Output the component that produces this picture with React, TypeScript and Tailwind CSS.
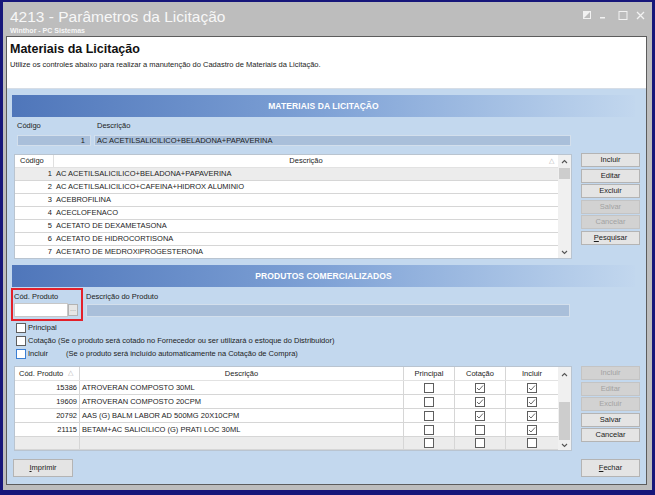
import React from "react";

const materiais = [
  "AC ACETILSALICILICO+BELADONA+PAPAVERINA",
  "AC ACETILSALICILICO+CAFEINA+HIDROX ALUMINIO",
  "ACEBROFILINA",
  "ACECLOFENACO",
  "ACETATO DE DEXAMETASONA",
  "ACETATO DE HIDROCORTISONA",
  "ACETATO DE MEDROXIPROGESTERONA",
];

const produtos = [
  { cod: "15386", desc: "ATROVERAN COMPOSTO 30ML", principal: false, cotacao: true, incluir: true },
  { cod: "19609", desc: "ATROVERAN COMPOSTO 20CPM", principal: false, cotacao: true, incluir: true },
  { cod: "20792", desc: "AAS (G) BALM LABOR AD 500MG 20X10CPM", principal: false, cotacao: true, incluir: true },
  { cod: "21115", desc: "BETAM+AC SALICILICO (G) PRATI LOC 30ML", principal: false, cotacao: false, incluir: true },
];

const SideButton: React.FC<{ label: string; disabled?: boolean; underline?: boolean; tall?: boolean }> = ({
  label,
  disabled,
  underline,
  tall,
}) => (
  <div
    className={`${tall ? "h-[18px]" : "h-[14px]"} flex items-center justify-center border text-[7.5px] ${
      disabled ? "bg-[#d2d2d2] border-[#c4c4c4] text-[#a2a2a2]" : "bg-[#e4e4e4] border-[#b4b4b4] text-[#1c1c1c]"
    }`}
  >
    {underline ? (
      <span>
        <span className="underline">{label[0]}</span>
        {label.slice(1)}
      </span>
    ) : (
      label
    )}
  </div>
);

const Check: React.FC<{ checked?: boolean; blue?: boolean }> = ({ checked, blue }) => (
  <div
    className={`w-[10px] h-[10px] border bg-white flex items-center justify-center ${
      blue ? "border-[#3b7fd4]" : "border-[#5e5e5e]"
    }`}
  >
    {checked && (
      <svg width="8" height="8" viewBox="0 0 8 8">
        <path d="M1 4 L3 6 L7 1.5" fill="none" stroke="#6a6a6a" strokeWidth="1" />
      </svg>
    )}
  </div>
);

const Chevron: React.FC<{ down?: boolean }> = ({ down }) => (
  <svg width="7" height="5" viewBox="0 0 7 5">
    <path d={down ? "M1 1 L3.5 3.5 L6 1" : "M1 4 L3.5 1.5 L6 4"} fill="none" stroke="#555" strokeWidth="1.1" />
  </svg>
);

const Banner: React.FC<{ title: string }> = ({ title }) => (
  <div className="ml-[5px] w-[623px] h-[22px] flex items-center justify-center bg-gradient-to-r from-[#4f76ba] via-[#7fa2d6] to-[#c2d7ee]">
    <span className="text-white font-bold text-[8.5px] tracking-[0.1px]">{title}</span>
  </div>
);

export default function App() {
  return (
    <div className="w-[655px] h-[495px] bg-[#16167a] pt-[2px] pl-[3px] pr-[3px] pb-[5px] font-['Liberation_Sans',Arial,sans-serif] text-[#1c1c1c]">
      <div className="h-full bg-[#bdbdbd] flex flex-col pl-[3px] pr-[5px] pb-[5px]">
        {/* title bar */}
        <div className="h-[34px] flex justify-between pl-[4px] pr-[2px] shrink-0">
          <div className="flex flex-col pt-[6px]">
            <span className="text-[15.5px] leading-[17px] text-[#f7f7f7]">4213 - Parâmetros da Licitação</span>
            <span className="text-[7px] leading-[9px] font-bold text-[#f7f7f7] mt-[1px]">Winthor - PC Sistemas</span>
          </div>
          <div className="flex items-start gap-[8px] pt-[9px]">
            <svg width="8" height="8" viewBox="0 0 8 8">
              <rect x="0.5" y="0.5" width="7" height="7" fill="none" stroke="#f2f2f2" />
              <path d="M0.5 0.5 H7.5 L0.5 7.5 Z" fill="#f2f2f2" />
            </svg>
            <svg width="8" height="8" viewBox="0 0 8 8">
              <rect x="1" y="6" width="5" height="1.5" fill="#f2f2f2" />
            </svg>
            <svg width="10" height="9" viewBox="0 0 10 9" className="ml-[3px]">
              <rect x="1" y="0.5" width="8" height="8" fill="none" stroke="#f2f2f2" />
            </svg>
            <svg width="9" height="9" viewBox="0 0 9 9">
              <path d="M1 1 L8 8 M8 1 L1 8" stroke="#f2f2f2" strokeWidth="1.3" />
            </svg>
          </div>
        </div>

        {/* client area */}
        <div className="flex-1 border border-[#5c5c5c] flex flex-col">
          <div className="h-[51px] bg-white pl-[3px] pt-[5px] shrink-0">
            <div className="text-[12.5px] font-bold leading-[15px] text-[#111]">Materiais da Licitação</div>
            <div className="text-[7.5px] leading-[10px] mt-[3px]">
              Utilize os controles abaixo para realizar a manutenção do Cadastro de Materiais da Licitação.
            </div>
          </div>
          <div className="h-px bg-[#d6dde6] shrink-0" />

          <div className="flex-1 bg-[#c3d8ee] flex flex-col text-[7.5px]">
            <div className="mt-[6px]">
              <Banner title="MATERIAIS DA LICITAÇÃO" />
            </div>

            <div className="mt-[3px] h-[12px] flex items-center">
              <span className="ml-[10px] w-[80px]">Código</span>
              <span>Descrição</span>
            </div>
            <div className="mt-[3px] h-[11px] flex">
              <div className="ml-[10px] w-[74px] bg-[#a9bfda] border border-[#d3dfec] flex items-center justify-end pr-[5px]">
                1
              </div>
              <div className="ml-[3px] w-[477px] bg-[#a9bfda] border border-[#d3dfec] flex items-center pl-[2px]">
                AC ACETILSALICILICO+BELADONA+PAPAVERINA
              </div>
            </div>

            {/* materiais table */}
            <div className="mt-[8px] flex">
              <div className="ml-[7px] w-[558px] h-[105px] border border-[#b9c4d0] bg-white flex overflow-hidden">
                <div className="flex-1 flex flex-col">
                  <div className="h-[13px] flex items-center shrink-0 border-b border-[#e2e2e2]">
                    <div className="w-[39px] h-full flex items-center pl-[5px] border-r border-[#e0e0e0]">Código</div>
                    <div className="flex-1 relative flex items-center justify-center h-full">
                      Descrição
                      <span className="absolute right-[4px] text-[7px] text-[#b4b4b4]">△</span>
                    </div>
                  </div>
                  {materiais.map((m, i) => (
                    <div
                      key={m}
                      className={`h-[13px] shrink-0 flex items-center border-b border-[#d6d6d6] ${
                        i === 0 ? "bg-[#ececec]" : "bg-white"
                      }`}
                    >
                      <div className="w-[39px] text-right pr-[2px]">{i + 1}</div>
                      <div className="flex-1 pl-[2px]">{m}</div>
                    </div>
                  ))}
                </div>
                <div className="w-[13px] bg-[#f0f0f0] flex flex-col items-center">
                  <div className="h-[13px] flex items-center">
                    <Chevron />
                  </div>
                  <div className="w-[11px] h-[11px] bg-[#cdcdcd]" />
                  <div className="flex-1" />
                  <div className="h-[12px] flex items-center">
                    <Chevron down />
                  </div>
                </div>
              </div>
              <div className="ml-[9px] w-[59px] flex flex-col gap-[1.5px] -mt-[1px]">
                <SideButton label="Incluir" />
                <SideButton label="Editar" />
                <SideButton label="Excluir" />
                <SideButton label="Salvar" disabled />
                <SideButton label="Cancelar" disabled />
                <SideButton label="Pesquisar" underline />
              </div>
            </div>

            <div className="mt-[6px]">
              <Banner title="PRODUTOS COMERCIALIZADOS" />
            </div>

            {/* produto fields */}
            <div className="relative">
              <div className="mt-[5px] h-[10px] flex items-center">
                <span className="ml-[7px] w-[72px]">Cód. Produto</span>
                <span>Descrição do Produto</span>
              </div>
              <div className="mt-[1px] h-[14px] flex">
                <div className="ml-[7px] w-[54px] bg-white border border-[#c7c7c7]" />
                <div className="w-[10px] mt-[1px] h-[12px] bg-[#e6e6e6] border border-[#b3b3b3] flex items-center justify-center text-[6px] leading-none text-[#555]">
                  ···
                </div>
                <div className="ml-[8px] w-[484px] mt-[1px] h-[13px] bg-[#a9bfda] border border-[#d3dfec]" />
              </div>
              <div className="absolute left-[4px] top-[1px] w-[72px] h-[33px] border-2 border-[#e3202a]" />
            </div>

            <div className="mt-[4px] flex flex-col pl-[9px]">
              <div className="h-[13px] flex items-center gap-[2px]">
                <Check />
                <span>Principal</span>
              </div>
              <div className="h-[13px] flex items-center gap-[2px]">
                <Check />
                <span>
                  Cotação (Se o produto será cotado no Fornecedor ou ser utilizará o estoque do Distribuidor)
                </span>
              </div>
              <div className="h-[13px] flex items-center gap-[2px]">
                <Check blue />
                <span className="w-[36px]">Incluir</span>
                <span>(Se o produto será incluído automaticamente na Cotação de Compra)</span>
              </div>
            </div>

            {/* produtos table */}
            <div className="mt-[6px] flex">
              <div className="ml-[7px] w-[558px] h-[85px] border border-[#b9c4d0] bg-white flex overflow-hidden">
                <div className="flex-1 flex flex-col">
                  <div className="h-[14px] flex shrink-0 border-b border-[#e2e2e2]">
                    <div className="w-[65px] flex items-center pl-[4px] border-r border-[#d6d6d6]">
                      Cód. Produto
                      <span className="ml-[5px] text-[7px] text-[#b4b4b4]">△</span>
                    </div>
                    <div className="w-[324px] flex items-center justify-center border-r border-[#d6d6d6]">Descrição</div>
                    <div className="w-[51px] flex items-center justify-center border-r border-[#d6d6d6]">Principal</div>
                    <div className="w-[51px] flex items-center justify-center border-r border-[#d6d6d6]">Cotação</div>
                    <div className="flex-1 flex items-center justify-center">Incluir</div>
                  </div>
                  {produtos.map((p) => (
                    <div key={p.cod} className="h-[14px] flex shrink-0 border-b border-[#d6d6d6]">
                      <div className="w-[65px] flex items-center justify-end pr-[2px] border-r border-[#d6d6d6]">
                        {p.cod}
                      </div>
                      <div className="w-[324px] flex items-center pl-[2px] border-r border-[#d6d6d6]">{p.desc}</div>
                      <div className="w-[51px] flex items-center justify-center border-r border-[#d6d6d6]">
                        <Check checked={p.principal} />
                      </div>
                      <div className="w-[51px] flex items-center justify-center border-r border-[#d6d6d6]">
                        <Check checked={p.cotacao} />
                      </div>
                      <div className="flex-1 flex items-center justify-center">
                        <Check checked={p.incluir} />
                      </div>
                    </div>
                  ))}
                  <div className="flex-1 flex bg-[#ececec] border-b border-[#d6d6d6]">
                    <div className="w-[65px] border-r border-[#d6d6d6]" />
                    <div className="w-[324px] border-r border-[#d6d6d6]" />
                    <div className="w-[51px] flex items-center justify-center border-r border-[#d6d6d6]">
                      <Check />
                    </div>
                    <div className="w-[51px] flex items-center justify-center border-r border-[#d6d6d6]">
                      <Check />
                    </div>
                    <div className="flex-1 flex items-center justify-center">
                      <Check />
                    </div>
                  </div>
                </div>
                <div className="w-[13px] bg-[#f0f0f0] flex flex-col items-center">
                  <div className="h-[14px] flex items-center">
                    <Chevron />
                  </div>
                  <div className="mt-[21px] w-[11px] h-[38px] bg-[#cdcdcd]" />
                  <div className="flex-1" />
                  <div className="h-[10px] flex items-center">
                    <Chevron down />
                  </div>
                </div>
              </div>
              <div className="ml-[9px] w-[59px] flex flex-col gap-[1.5px]">
                <SideButton label="Incluir" disabled />
                <SideButton label="Editar" disabled />
                <SideButton label="Excluir" disabled />
                <SideButton label="Salvar" />
                <SideButton label="Cancelar" />
              </div>
            </div>

            <div className="mt-[8px] flex justify-between pl-[6px] pr-[6px]">
              <div className="w-[60px]">
                <SideButton label="Imprimir" underline tall />
              </div>
              <div className="w-[59px]">
                <SideButton label="Fechar" underline tall />
              </div>
            </div>
          </div>
        </div>
      </div>
    </div>
  );
}
